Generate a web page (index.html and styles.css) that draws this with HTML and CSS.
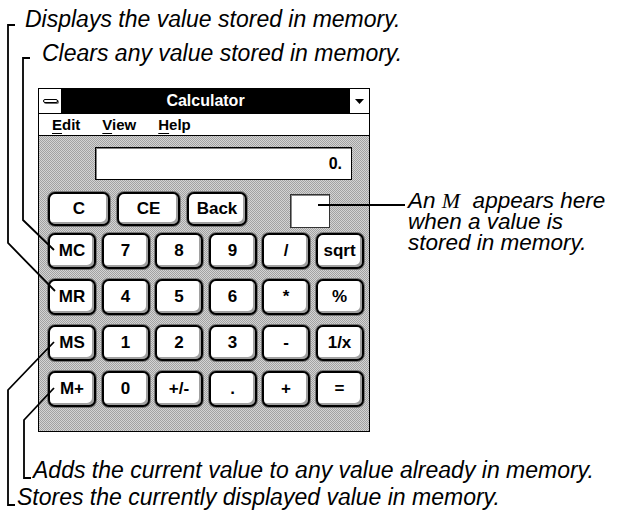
FILE: index.html
```html
<!DOCTYPE html>
<html lang="en">

    <head>
        <meta charset="UTF-8">
        <meta name="viewport" content="width=device-width, initial-scale=1.0">
        <title>Calculator memory keys</title>
        <link rel="stylesheet" href="styles.css">
    </head>

    <body>

        <div class="figure">
            <p class="note note-display">Displays the value stored in memory.</p>
            <p class="note note-clear">Clears any value stored in memory.</p>

            <div class="stage">
                <div class="window">
                    <div class="titlebar">
                        <span class="sysbox"><span class="sysbar"></span></span>
                        <span class="title">Calculator</span>
                        <span class="minbox">
                            <svg width="9" height="5" viewBox="0 0 9 5"><path d="M0 0H9L4.5 5Z" fill="#000"/></svg>
                        </span>
                    </div>
                    <div class="menubar">
                        <span class="menu-item"><u>E</u>dit</span>
                        <span class="menu-item"><u>V</u>iew</span>
                        <span class="menu-item"><u>H</u>elp</span>
                    </div>
                    <div class="calc-body">
                        <div class="display">0.</div>
                        <div class="toprow">
                            <button class="key key-c">C</button>
                            <button class="key key-ce">CE</button>
                            <button class="key key-back">Back</button>
                            <div class="membox"></div>
                        </div>
                        <div class="keys">
                            <button class="key">MC</button>
                            <button class="key">7</button>
                            <button class="key">8</button>
                            <button class="key">9</button>
                            <button class="key">/</button>
                            <button class="key">sqrt</button>

                            <button class="key">MR</button>
                            <button class="key">4</button>
                            <button class="key">5</button>
                            <button class="key">6</button>
                            <button class="key">*</button>
                            <button class="key">%</button>

                            <button class="key">MS</button>
                            <button class="key">1</button>
                            <button class="key">2</button>
                            <button class="key">3</button>
                            <button class="key">-</button>
                            <button class="key">1/x</button>

                            <button class="key">M+</button>
                            <button class="key">0</button>
                            <button class="key">+/-</button>
                            <button class="key">.</button>
                            <button class="key">+</button>
                            <button class="key">=</button>
                        </div>
                    </div>
                </div>

                <p class="note note-side">An <span class="var">M</span> &nbsp;appears here<br>when a value is<br>stored in memory.</p>
            </div>

            <p class="note note-add">Adds the current value to any value already in memory.</p>
            <p class="note note-store">Stores the currently displayed value in memory.</p>

            <!-- leader lines from the notes to the keys -->
            <svg class="leaders" viewBox="0 0 621 517" width="621" height="517">
                <polyline points="15,25 8,25 8,243 55,291"/>
                <polyline points="30,58 23,58 23,220 54,250"/>
                <polyline points="54,342 8,390 8,505 15,505"/>
                <polyline points="54,388 24,420 24,478 31,478"/>
                <polyline points="318,205 405,205"/>
            </svg>
        </div>

    </body>

</html>
```

FILE: styles.css
```css
body {
    margin: 0;
    font-family: "Liberation Sans", Arial, sans-serif;
    background-color: #fff;
    color: #000;
}

.figure {
    position: relative;
    width: 621px;
    height: 517px;
    overflow: hidden;
}

.note {
    margin: 0;
    font-style: italic;
    font-size: 23px;
    line-height: 26px;
    white-space: nowrap;
}

.note-display {
    padding: 6px 0 0 25px;
}

.note-clear {
    padding: 8px 0 0 42px;
}

.stage {
    display: flex;
    align-items: flex-start;
    margin-top: 22px;
}

.note-side {
    margin-left: 38px;
    margin-top: 102px;
    font-size: 22.5px;
    line-height: 21px;
}

.var {
    font-family: "Liberation Serif", "Times New Roman", serif;
    font-size: 22px;
}

.note-add {
    padding: 25px 0 0 33px;
}

.note-store {
    padding: 1px 0 0 17px;
}

.leaders {
    position: absolute;
    left: 0;
    top: 0;
    pointer-events: none;
}

.leaders polyline {
    fill: none;
    stroke: #000;
    stroke-width: 1.8;
}

/* calculator window */

.window {
    margin-left: 38px;
    width: 330px;
    border: 1px solid #000;
    flex-shrink: 0;
}

.titlebar {
    display: flex;
    height: 24px;
    background-color: #000;
}

.sysbox {
    width: 22px;
    background-color: #fff;
    border-right: 1px solid #000;
    display: flex;
    align-items: center;
    justify-content: center;
}

.sysbar {
    width: 13px;
    height: 2px;
    border: 1px solid #000;
    border-radius: 2px;
    background-color: #fff;
    box-shadow: 1px 1px 0 #666;
}

.title {
    flex: 1;
    color: #fff;
    text-align: center;
    font-weight: bold;
    font-size: 16px;
    line-height: 24px;
}

.minbox {
    width: 19px;
    background-color: #fff;
    border-left: 1px solid #000;
    display: flex;
    align-items: center;
    justify-content: center;
}

.menubar {
    display: flex;
    gap: 22px;
    height: 21px;
    padding-left: 13px;
    border-top: 1px solid #000;
    border-bottom: 1px solid #000;
    font-weight: bold;
    font-size: 15px;
    line-height: 21px;
}

.menubar u {
    text-underline-offset: 3px;
    text-decoration-thickness: 1px;
}

.calc-body {
    padding: 11px 5.5px 24px 9px;
    background-color: #d4d4d4;
    background-image: repeating-conic-gradient(#a2a2a2 0 25%, transparent 0 50%);
    background-size: 2px 2px;
}

.display {
    height: 31px;
    margin: 0 11.5px 0 47px;
    padding-right: 9px;
    background-color: #fff;
    border: 1px solid #000;
    box-shadow: inset 1px 1px 0 #808080;
    text-align: right;
    font-weight: bold;
    font-size: 16px;
    line-height: 31px;
}

.toprow {
    display: flex;
    align-items: flex-start;
    gap: 7px;
    margin-top: 12px;
    height: 34px;
}

.key {
    display: flex;
    align-items: center;
    justify-content: center;
    padding: 0;
    height: 100%;
    background-color: #fff;
    border: 2px solid #000;
    border-radius: 7px;
    box-shadow: inset -2px -2px 0 #a0a0a0, 0 0 0 1px #777;
    font-family: "Liberation Sans Narrow", "Liberation Sans", Arial, sans-serif;
    font-weight: bold;
    font-size: 17px;
    color: #000;
}

.key-c {
    width: 62px;
}

.key-ce {
    width: 63px;
}

.key-back {
    width: 60px;
}

.membox {
    width: 40px;
    height: 34px;
    margin: 2px 0 0 36px;
    box-sizing: border-box;
    background-color: #fff;
    border: 1px solid #333;
    box-shadow: inset 1px 1px 0 #888;
}

.keys {
    display: grid;
    grid-template-columns: repeat(6, 48px);
    grid-auto-rows: 36px;
    column-gap: 5.5px;
    row-gap: 10px;
    margin-top: 7px;
}
```
